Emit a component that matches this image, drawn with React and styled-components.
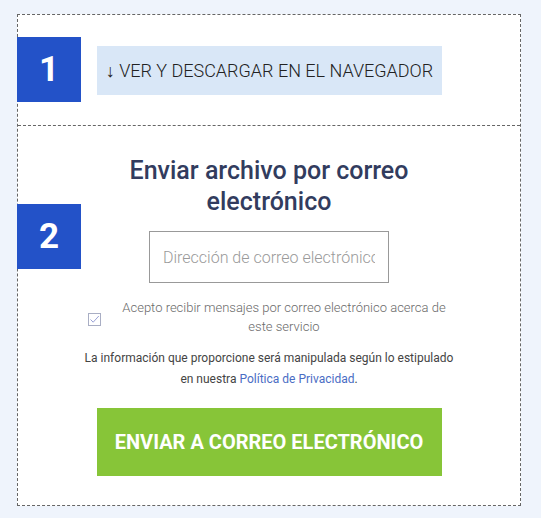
import React from "react";
import styled, { createGlobalStyle } from "styled-components";

const GlobalStyle = createGlobalStyle`
  body {
    margin: 0;
    background: #eff4fc;
    font-family: Roboto, "Liberation Sans", sans-serif;
  }
`;

const Card = styled.div`
  width: 504px;
  margin: 14px 0 0 17px;
  border: 1px dashed #666;
  background: #fff;
  box-sizing: border-box;
`;

const Section = styled.div`
  position: relative;
  display: flex;
  flex-direction: column;
  align-items: center;
  border-top: ${props => (props.divided ? "1px dashed #666" : "none")};
`;

const StepOne = styled(Section)`
  height: 110px;
  justify-content: center;
`;

const StepTwo = styled(Section)`
  padding: 29px 0 29px;
`;

const Badge = styled.div`
  position: absolute;
  left: -1px;
  top: ${props => props.top}px;
  width: 64px;
  height: 65px;
  background: #2352c8;
  color: #fff;
  font-size: 35px;
  font-weight: 700;
  display: flex;
  align-items: center;
  justify-content: center;
`;

const ViewButton = styled.button`
  width: 345px;
  height: 49px;
  border: none;
  background: #d9e7f7;
  color: #222;
  font-family: Roboto, "Liberation Sans", sans-serif;
  font-size: 18px;
  font-weight: 300;
  white-space: nowrap;
  padding: 0;
  margin-left: 1px;
  margin-top: 1px;
`;

const Title = styled.h2`
  margin: 0;
  width: 320px;
  text-align: center;
  font-size: 25px;
  line-height: 31px;
  font-weight: 500;
  color: #323c5e;
`;

const EmailInput = styled.input`
  margin-top: 14px;
  width: 240px;
  height: 52px;
  box-sizing: border-box;
  border: 1px solid #999;
  padding: 0 13px;
  font-family: Roboto, "Liberation Sans", sans-serif;
  font-size: 16px;
  font-weight: 300;
  &::placeholder {
    color: #9a9a9a;
  }
`;

const ConsentRow = styled.label`
  margin-top: 15px;
  display: flex;
  align-items: center;
  gap: 17px;
  width: 362px;
`;

const Box = styled.span`
  flex: none;
  width: 13px;
  height: 13px;
  display: flex;
  margin-top: 4px;
`;

const ConsentText = styled.span`
  text-align: center;
  font-size: 13px;
  line-height: 19px;
  font-weight: 300;
  color: #6a6a6a;
`;

const Info = styled.p`
  margin: 12px 0 0;
  width: 370px;
  text-align: center;
  font-size: 12px;
  line-height: 21px;
  color: #444;
`;

const Link = styled.a`
  color: #4a6dc4;
  text-decoration: none;
`;

const SendButton = styled.button`
  margin-top: 18px;
  width: 345px;
  height: 68px;
  border: none;
  background: #87c538;
  color: #fff;
  font-family: Roboto, "Liberation Sans", sans-serif;
  font-size: 20px;
  font-weight: 700;
  white-space: nowrap;
  padding: 0;
`;

export default function App() {
  return (
    <>
      <GlobalStyle />
      <Card>
        <StepOne>
          <Badge top={22}>1</Badge>
          <ViewButton>↓ VER Y DESCARGAR EN EL NAVEGADOR</ViewButton>
        </StepOne>
        <StepTwo divided>
          <Badge top={78}>2</Badge>
          <Title>Enviar archivo por correo electrónico</Title>
          <EmailInput placeholder="Dirección de correo electrónico" />
          <ConsentRow>
            <Box>
              <svg width="13" height="13" viewBox="0 0 13 13">
                <rect x="0.5" y="0.5" width="12" height="12" fill="#fff" stroke="#a9aec4" />
                <path d="M2.5 6.5 L5.2 9.2 L10.8 3" fill="none" stroke="#9aa2d6" strokeWidth="1" />
              </svg>
            </Box>
            <ConsentText>
              Acepto recibir mensajes por correo electrónico acerca de este servicio
            </ConsentText>
          </ConsentRow>
          <Info>
            La información que proporcione será manipulada según lo estipulado en nuestra{" "}
            <Link href="#">Política de Privacidad</Link>.
          </Info>
          <SendButton>ENVIAR A CORREO ELECTRÓNICO</SendButton>
        </StepTwo>
      </Card>
    </>
  );
}
